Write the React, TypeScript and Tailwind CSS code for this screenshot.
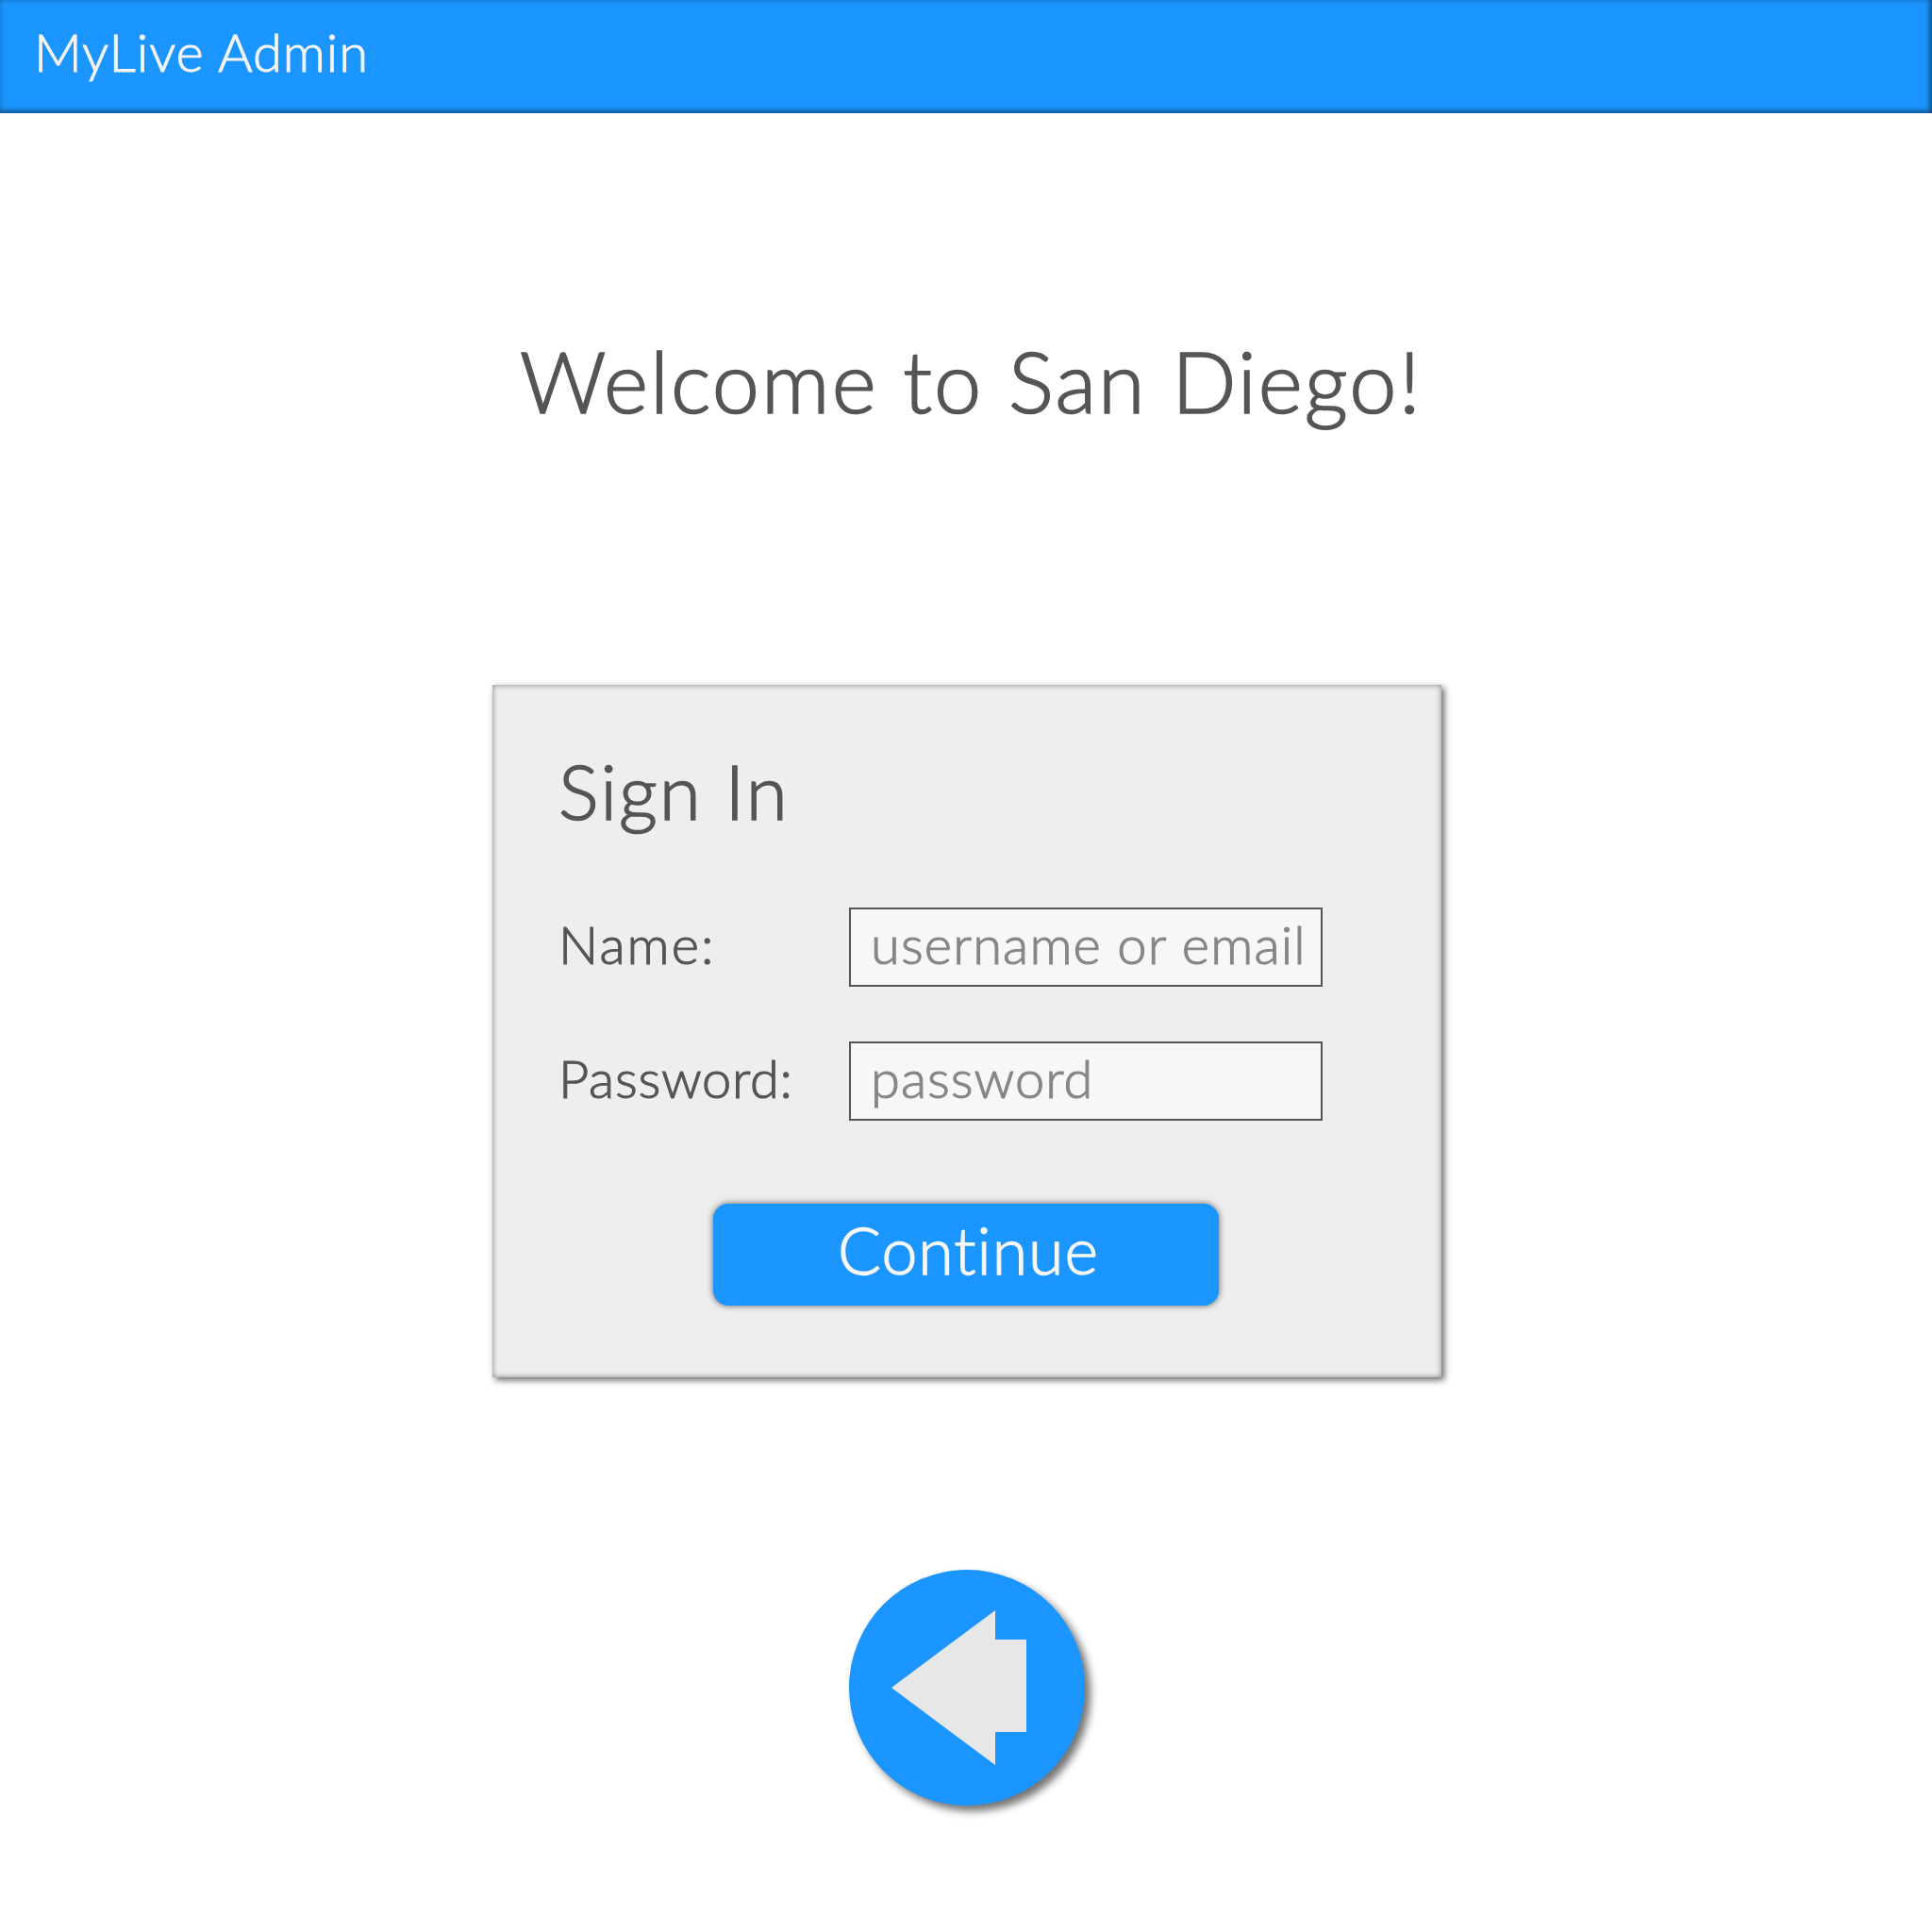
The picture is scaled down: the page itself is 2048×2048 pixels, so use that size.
import React from "react";

type FieldProps = {
  label: string;
  labelClass: string;
  placeholder: string;
  inputClass: string;
};

function Field({ label, labelClass, placeholder, inputClass }: FieldProps) {
  return (
    <label className="flex h-[84px] w-[810px] items-start justify-between">
      <span className={`block whitespace-nowrap pt-px text-[56px] leading-[76px] [-webkit-text-stroke:1.1px] ${labelClass}`}>
        {label}
      </span>
      <input
        type="text"
        placeholder={placeholder}
        className={`block h-[84px] w-[502px] rounded-none border-2 border-[#555555] bg-[#f7f7f7] pt-0 pr-0 pb-[7px] pl-[21px] text-[56px] leading-[73px] outline-none [-webkit-text-stroke:1.1px_#868686] placeholder:text-[#868686] placeholder:opacity-100 ${inputClass}`}
      />
    </label>
  );
}

function BackButton() {
  return (
    <button
      aria-label="Back"
      className="mt-[204px] ml-[900px] block size-[250px] rounded-full bg-[#1b95ff] shadow-[6px_6px_8px_rgba(0,0,0,0.55)]"
    >
      <svg viewBox="0 0 250 250" className="block size-full" fill="#e7e7e7">
        <path d="M45 125 155 43V74H188V172H155V207Z" />
      </svg>
    </button>
  );
}

export default function App() {
  return (
    <div className="flex h-[2048px] w-[2048px] flex-col overflow-hidden bg-white font-['Lato',sans-serif] font-light text-[#555555]">
      <header className="h-[120px] shrink-0 bg-[#1b95ff] pt-[25px] pl-[36px] shadow-[inset_-2px_-2px_6px_rgba(0,0,0,0.55)]">
        <div className="whitespace-nowrap text-[56px] leading-[60px] tracking-[0.95px] text-[#f4f4f4] [-webkit-text-stroke:1px]">
          MyLive Admin
        </div>
      </header>

      <main className="flex flex-col">
        <h1 className="mt-[229px] ml-[551px] whitespace-nowrap text-[90px] leading-[108px] tracking-[2.1px] [-webkit-text-stroke:1.7px]">
          Welcome to San Diego!
        </h1>

        <section className="mt-[269px] ml-[522px] h-[734px] w-[1006px] bg-[#eeeeee] pt-[64px] pl-[70px] shadow-[3px_3px_7px_rgba(0,0,0,0.6),inset_0_0_6px_rgba(0,0,0,0.45)]">
          <h2 className="whitespace-nowrap text-[80px] leading-[96px] tracking-[2px] [-webkit-text-stroke:1.6px]">Sign In</h2>
          <form className="mt-[76px] flex flex-col">
            <div className="flex flex-col gap-[58px]">
              <Field label="Name:" labelClass="tracking-[2.1px]" placeholder="username or email" inputClass="tracking-[1.15px]" />
              <Field label="Password:" labelClass="tracking-[0.7px]" placeholder="password" inputClass="tracking-[1px]" />
            </div>
            <button
              type="button"
              className="mt-[88px] ml-[164px] block h-[108px] w-[536px] rounded-[16px] bg-[#1b95ff] pb-[11px] pl-[5px] text-[68px] leading-[97px] tracking-[1px] text-[#f7f7f7] shadow-[0_0_7px_rgba(0,0,0,0.6)] [-webkit-text-stroke:1.3px]"
            >
              Continue
            </button>
          </form>
        </section>

        <BackButton />
      </main>
    </div>
  );
}
